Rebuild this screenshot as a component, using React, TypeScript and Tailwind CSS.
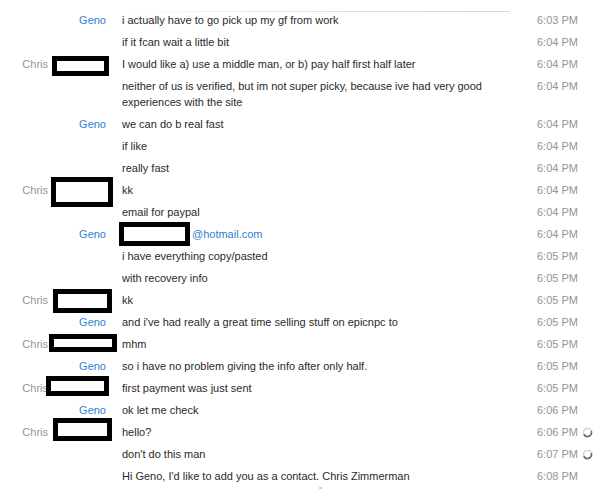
import React from "react";

type Box = { left: number; top: number; w: number; h: number };

type Msg = {
  who?: "Geno" | "Chris";
  text: React.ReactNode;
  time: string;
  box?: Box;
  pending?: boolean;
};

const messages: Msg[] = [
  { who: "Geno", text: "i actually have to go pick up my gf from work", time: "6:03 PM" },
  { text: "if it fcan wait a little bit", time: "6:04 PM" },
  { who: "Chris", text: "I would like a) use a middle man, or b) pay half first half later", time: "6:04 PM", box: { left: 52, top: 3, w: 57, h: 20 } },
  { text: "neither of us is verified, but im not super picky, because ive had very good experiences with the site", time: "6:04 PM" },
  { who: "Geno", text: "we can do b real fast", time: "6:04 PM" },
  { text: "if like", time: "6:04 PM" },
  { text: "really fast", time: "6:04 PM" },
  { who: "Chris", text: "kk", time: "6:04 PM", box: { left: 51, top: -2, w: 62, h: 30 } },
  { text: "email for paypal", time: "6:04 PM" },
  {
    who: "Geno",
    text: (
      <>
        <span className="inline-block w-[70px]" />
        <span className="text-[#2f80d2]">@hotmail.com</span>
      </>
    ),
    time: "6:04 PM",
    box: { left: 119, top: -1, w: 71, h: 24 },
  },
  { text: "i have everything copy/pasted", time: "6:05 PM" },
  { text: "with recovery info", time: "6:05 PM" },
  { who: "Chris", text: "kk", time: "6:05 PM", box: { left: 53, top: 0, w: 59, h: 24 } },
  { who: "Geno", text: "and i've had really a great time selling stuff on epicnpc to", time: "6:05 PM" },
  { who: "Chris", text: "mhm", time: "6:05 PM", box: { left: 49, top: 1, w: 68, h: 18 } },
  { who: "Geno", text: "so i have no problem giving the info after only half.", time: "6:05 PM" },
  { who: "Chris", text: "first payment was just sent", time: "6:05 PM", box: { left: 46, top: -1, w: 63, h: 20 } },
  { who: "Geno", text: "ok let me check", time: "6:06 PM" },
  { who: "Chris", text: "hello?", time: "6:06 PM", box: { left: 53, top: -3, w: 59, h: 23 }, pending: true },
  { text: "don't do this man", time: "6:07 PM", pending: true },
  { text: "Hi Geno, I'd like to add you as a contact. Chris Zimmerman", time: "6:08 PM" },
];

function Spinner() {
  return (
    <svg width="11" height="11" viewBox="0 0 11 11" className="block">
      <circle cx="5.5" cy="5.5" r="4" fill="none" stroke="#d6d6d6" strokeWidth="1.6" />
      <circle
        cx="5.5"
        cy="5.5"
        r="4"
        fill="none"
        stroke="#6a6a6a"
        strokeWidth="1.6"
        strokeDasharray="12 25"
        transform="rotate(-20 5.5 5.5)"
      />
    </svg>
  );
}

function Row({ m }: { m: Msg }) {
  return (
    <div className="relative flex items-start py-[3px] leading-[16px]">
      <div className="w-[106px] shrink-0 flex justify-end">
        {m.who === "Geno" && <span className="text-[#2f80d2]">Geno</span>}
        {m.who === "Chris" && (
          <>
            <span className="text-[#959595]">Chris</span>
            <span className="inline-block w-[58px]" />
          </>
        )}
      </div>
      <div className="ml-[16px] w-[370px] shrink-0 text-[#2a2a2a]">{m.text}</div>
      <div className="ml-[45px] w-[44px] shrink-0 whitespace-nowrap text-[#949494]">{m.time}</div>
      <div className="ml-[1px] pt-[3px]">{m.pending && <Spinner />}</div>
      {m.box && (
        <div
          className="absolute border-[5px] border-black bg-white"
          style={{ left: m.box.left, top: m.box.top, width: m.box.w, height: m.box.h }}
        />
      )}
    </div>
  );
}

export default function App() {
  return (
    <div className="w-[611px] h-[491px] overflow-hidden bg-white text-[11px] font-['Liberation_Sans',Arial,sans-serif]">
      <div className="pt-[11px]">
        <div className="ml-[120px] w-[390px] h-px bg-gradient-to-r from-white via-[#e2e2e2] to-[#d8d8d8]" />
      </div>
      <div className="-mt-[3px]">
        {messages.map((m, i) => (
          <Row key={i} m={m} />
        ))}
      </div>
      <div className="ml-[319px] w-[3px] h-[2px] rounded-full bg-[#a9c8ea]" />
    </div>
  );
}
